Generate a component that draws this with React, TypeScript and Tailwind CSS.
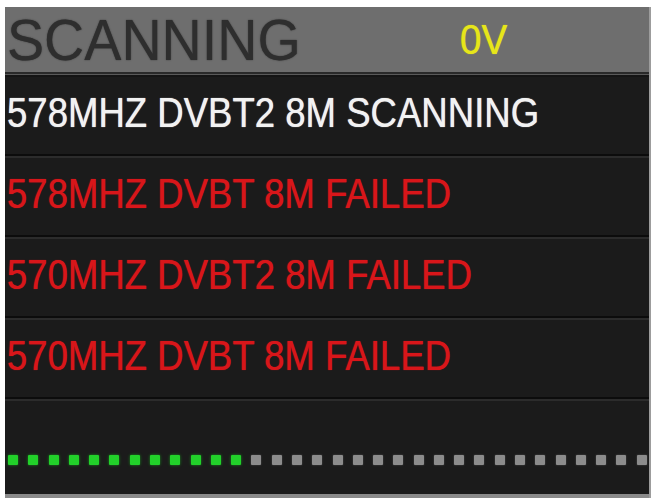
import React from "react";

type ScanRow = { label: string; status: "scanning" | "failed" };

const rows: ScanRow[] = [
  { label: "578MHZ DVBT2 8M SCANNING", status: "scanning" },
  { label: "578MHZ DVBT 8M FAILED", status: "failed" },
  { label: "570MHZ DVBT2 8M FAILED", status: "failed" },
  { label: "570MHZ DVBT 8M FAILED", status: "failed" },
];

const TOTAL_STEPS = 32;
const DONE_STEPS = 12;

// thin double line between list rows
const Divider = () => (
  <div className="h-[4px] border-t-2 border-[#0c0c0c] bg-[#2c2c2c]" />
);

const Row = ({ row }: { row: ScanRow }) => (
  <div className="flex h-[77px] items-center pl-[2px] pb-[6px]">
    <span
      className={`inline-block origin-left scale-x-[0.85] whitespace-nowrap text-[43px] leading-none [text-shadow:0_0_1px_currentColor] ${
        row.status === "failed" ? "text-[#d8161a]" : "text-[#f2f2f2]"
      }`}
    >
      {row.label}
    </span>
  </div>
);

export default function App() {
  return (
    <div
      className="h-[498px] w-[651px] overflow-hidden bg-white pt-[7px] pl-[5px]"
      style={{ fontFamily: '"Liberation Sans", Arial, sans-serif' }}
    >
      <div className="flex h-[491px] w-[646px] flex-col border-r-2 border-[#9c9c9c] bg-[#1b1b1b]">
        {/* title bar */}
        <div className="flex h-[65px] items-center bg-[#6e6e6e]">
          <span className="inline-block w-[455px] origin-left scale-x-[0.96] pl-[2px] text-[58px] leading-none text-[#2e2e2e] [text-shadow:0_0_1.5px_#2e2e2e]">
            SCANNING
          </span>
          <span className="inline-block origin-left scale-x-[0.9] text-[43px] leading-none text-[#e6e61a] [text-shadow:0_0_1px_#e6e61a]">
            0V
          </span>
        </div>
        <div className="h-[5px] border-t-2 border-[#2a2a2a] border-b-2 border-b-[#151515] bg-[#5a5a5a]" />

        <Row row={rows[0]} />
        <Divider />
        <Row row={rows[1]} />
        <Divider />
        <Row row={rows[2]} />
        <Divider />
        <Row row={rows[3]} />
        <Divider />

        {/* progress dots */}
        <div className="flex flex-1 flex-col justify-end pb-[29px]">
          <div className="flex justify-between pl-[3px] pr-[2px]">
            {Array.from({ length: TOTAL_STEPS }).map((_, i) => (
              <div
                key={i}
                className={
                  i < DONE_STEPS
                    ? "h-[10px] w-[10px] rounded-[1px] bg-[#22d12a] shadow-[0_0_3px_#1a8f1f]"
                    : "h-[10px] w-[10px] rounded-[1px] bg-[#8c8c8c] shadow-[0_0_2px_#555]"
                }
              />
            ))}
          </div>
        </div>
        <div className="h-[4px] bg-[#8a8a8a]" />
      </div>
    </div>
  );
}
